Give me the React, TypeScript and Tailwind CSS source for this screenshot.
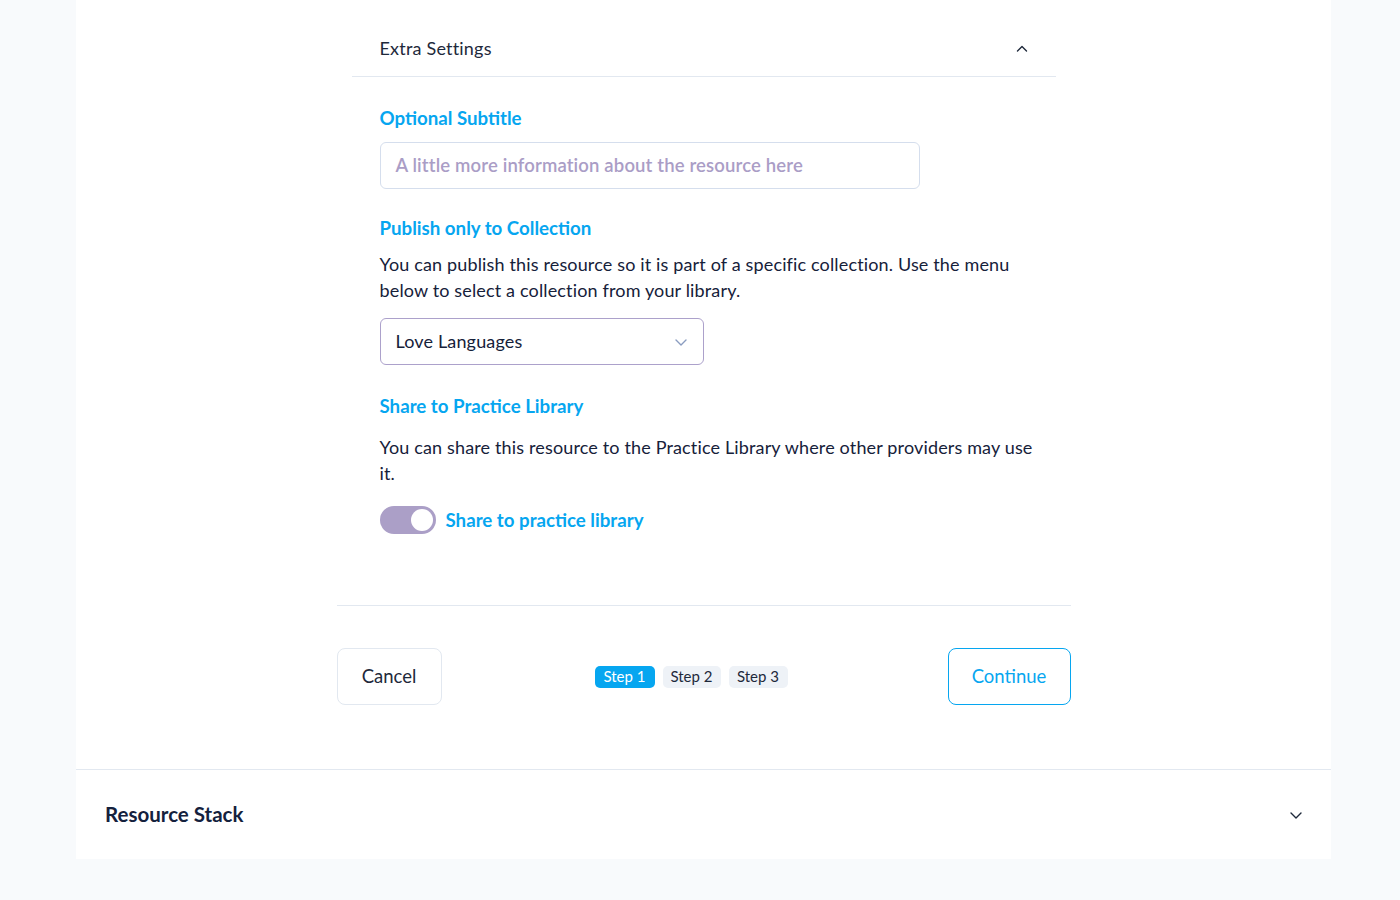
import React from "react";

const font = { fontFamily: "Lato, 'Noto Sans', sans-serif" };

function ChevronUp({ className = "" }: { className?: string }) {
  return (
    <svg className={className} width="14" height="14" viewBox="0 0 14 14" fill="none">
      <path d="M2.5 9L7 4.5L11.5 9" stroke="currentColor" strokeWidth="1.4" strokeLinecap="round" strokeLinejoin="round" />
    </svg>
  );
}
function ChevronDown({ className = "" }: { className?: string }) {
  return (
    <svg className={className} width="14" height="14" viewBox="0 0 14 14" fill="none">
      <path d="M2 5L7 10L12 5" stroke="currentColor" strokeWidth="1.4" strokeLinecap="round" strokeLinejoin="round" />
    </svg>
  );
}

export default function App() {
  return (
    <div className="min-h-[900px] w-[1400px] bg-[#f8fafc]" style={font}>
      <div className="ml-[76px] w-[1255px] bg-white">
        <div className="flex h-[769px] flex-col items-center pt-[21px]">
          <div className="w-[734px]">
            <div className="mx-[15px]">
              <div className="flex h-[56px] items-center justify-between border-b border-[#e2e8f0] px-[28px]">
                <span className="text-[18px] tracking-[0.2px] text-[#1e293b]">Extra Settings</span>
                <ChevronUp className="mr-[-1px] text-[#1e293b]" />
              </div>
              <div className="px-[28px] pt-[28px] pb-[71px]">
                <div className="text-[18.7px] leading-[26px] font-bold text-[#06a6f0]">Optional Subtitle</div>
                <div className="mt-[11px] flex h-[47px] w-[540px] items-center rounded-[6px] border border-[#d5deed] px-[15px]">
                  <span className="text-[18.5px] font-semibold tracking-[0.15px] text-[#aa9dc6]">
                    A little more information about the resource here
                  </span>
                </div>
                <div className="mt-[26px] text-[18.7px] leading-[26px] font-bold text-[#06a6f0]">Publish only to Collection</div>
                <p className="mt-[10px] w-[660px] text-[18px] leading-[26px] tracking-[0.15px] text-[#16213a]">
                  You can publish this resource so it is part of a specific collection. Use the menu below to select a
                  collection from your library.
                </p>
                <div className="mt-[15px] flex h-[47px] w-[324px] items-center justify-between rounded-[6px] border border-[#aca1cb] pr-[15px] pl-[15px]">
                  <span className="text-[18px] tracking-[0.15px] text-[#16213a]">Love Languages</span>
                  <ChevronDown className="text-[#8a9cc0]" />
                </div>
                <div className="mt-[28px] text-[18.7px] leading-[26px] font-bold text-[#06a6f0]">Share to Practice Library</div>
                <p className="mt-[15px] w-[660px] text-[18px] leading-[26px] tracking-[0.15px] text-[#16213a]">
                  You can share this resource to the Practice Library where other providers may use it.
                </p>
                <div className="mt-[20px] flex items-center gap-[10px]">
                  <div className="flex h-[28px] w-[56px] items-center justify-end rounded-full bg-[#ab9fc7] pr-[3px]">
                    <div className="h-[22px] w-[22px] rounded-full bg-white" />
                  </div>
                  <span className="text-[18.7px] font-bold text-[#06a6f0]">Share to practice library</span>
                </div>
              </div>
            </div>
            <div className="border-t border-[#e2e8f0]" />
            <div className="mt-[42px] flex items-center justify-between">
              <button className="h-[57px] w-[105px] rounded-[8px] border border-[#e2e8f0] text-[18.5px] text-[#1e293b]">
                Cancel
              </button>
              <div className="ml-[-7px] flex gap-[8px]">
                <span className="flex h-[22px] w-[60px] items-center justify-center rounded-[5px] bg-[#06a6f0] text-[15px] text-white">
                  Step 1
                </span>
                <span className="flex h-[22px] w-[58px] items-center justify-center rounded-[5px] bg-[#eef2f7] text-[15px] text-[#1e293b]">
                  Step 2
                </span>
                <span className="flex h-[22px] w-[59px] items-center justify-center rounded-[5px] bg-[#eef2f7] text-[15px] text-[#1e293b]">
                  Step 3
                </span>
              </div>
              <button className="h-[57px] w-[123px] rounded-[8px] border-[1.5px] border-[#06a6f0] text-[18.5px] text-[#06a6f0]">
                Continue
              </button>
            </div>
          </div>
        </div>
        <div className="flex h-[90px] items-center justify-between border-t border-[#e2e8f0] pr-[28px] pl-[29px]">
          <span className="text-[20.5px] font-bold text-[#14213d]">Resource Stack</span>
          <ChevronDown className="text-[#1e293b]" />
        </div>
      </div>
    </div>
  );
}
